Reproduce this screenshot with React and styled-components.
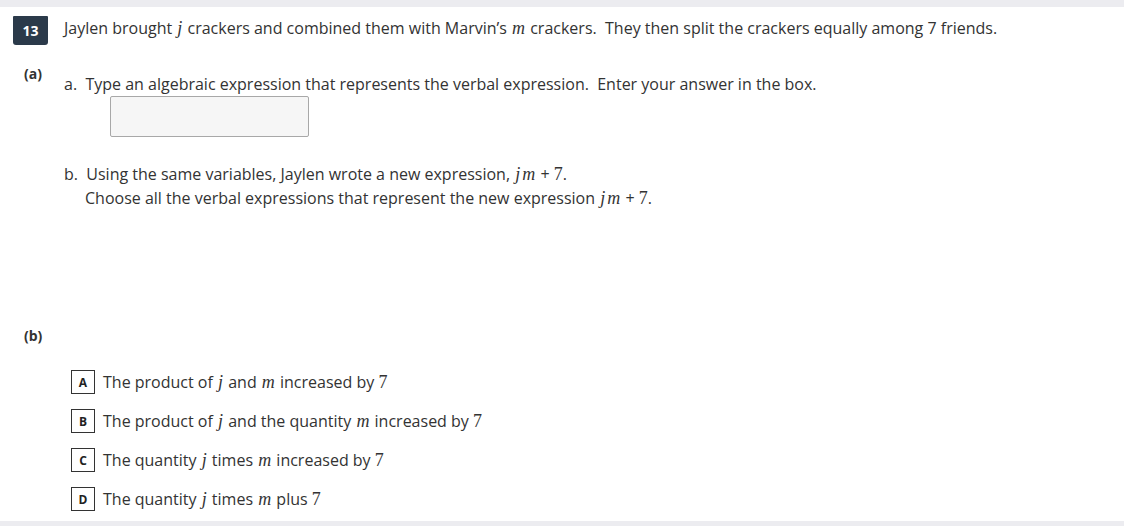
import React from 'react';
import styled, { createGlobalStyle } from 'styled-components';

const GlobalStyle = createGlobalStyle`
  html, body {
    margin: 0;
    padding: 0;
    background: #ffffff;
  }
  body {
    font-family: "Open Sans", "Liberation Sans", sans-serif;
    color: #333333;
  }
`;

const Page = styled.div`
  width: 1124px;
  height: 526px;
  display: flex;
  flex-direction: column;
  overflow: hidden;
  background: #ffffff;
`;

const Strip = styled.div`
  height: ${(p) => p.h}px;
  flex-shrink: 0;
  background: #ececf0;
`;

const Scroller = styled.div`
  height: 504px;
  overflow: hidden;
  flex-shrink: 0;
`;

const Spacer = styled.div`
  flex: 1;
`;

const QuestionHeader = styled.div`
  display: flex;
  align-items: flex-start;
  gap: 16px;
  padding: 9px 0 0 13px;
`;

const Badge = styled.div`
  width: 35px;
  height: 29px;
  background: #2b3a4a;
  color: #ffffff;
  font-weight: 700;
  font-size: 14px;
  display: flex;
  align-items: center;
  justify-content: center;
  border-radius: 1px 1px 3px 3px;
`;

const Stem = styled.p`
  margin: 0;
  font-size: 16px;
  line-height: 24px;
`;

const Part = styled.div`
  display: grid;
  grid-template-columns: 64px 1fr;
  margin-top: ${(p) => p.top}px;
`;

const PartLabel = styled.div`
  font-size: 14px;
  font-weight: 700;
  padding-left: 24px;
  line-height: 20px;
`;

const Content = styled.div`
  display: flex;
  flex-direction: column;
`;

const Line = styled.div`
  font-size: 16px;
  line-height: 24px;
  padding-left: ${(p) => (p.indent ? 21 : 0)}px;
  margin-top: ${(p) => p.top || 0}px;
`;

const AnswerBox = styled.div`
  width: 197px;
  height: 39px;
  margin: 0 0 0 46px;
  border: 1px solid #a8a8a8;
  border-radius: 2px;
  background: #f6f6f6;
`;

const Var = styled.span`
  font-family: "Liberation Serif", "DejaVu Serif", serif;
  font-style: italic;
  font-size: 18px;
  padding: 0 1px;
`;

const Num = styled.span`
  font-family: "Liberation Serif", "DejaVu Serif", serif;
  font-size: 18px;
`;

const Options = styled.div`
  display: flex;
  flex-direction: column;
  gap: 15px;
  padding-left: 7px;
  margin-top: 44px;
`;

const Option = styled.div`
  display: flex;
  align-items: center;
  gap: 8px;
  height: 24px;
`;

const Letter = styled.div`
  width: 22px;
  height: 22px;
  border: 1px solid #333333;
  font-size: 12px;
  font-weight: 700;
  display: flex;
  align-items: center;
  justify-content: center;
  color: #222222;
`;

const OptText = styled.div`
  font-size: 16px;
  line-height: 24px;
`;

const j = <Var>j</Var>;
const m = <Var>m</Var>;
const seven = <Num>7</Num>;

const options = [
  ['A', <>The product of {j} and {m} increased by {seven}</>],
  ['B', <>The product of {j} and the quantity {m} increased by {seven}</>],
  ['C', <>The quantity {j} times {m} increased by {seven}</>],
  ['D', <>The quantity {j} times {m} plus {seven}</>],
];

export default function App() {
  return (
    <Page>
      <GlobalStyle />
      <Strip h={7} />
      <Scroller>
        <QuestionHeader>
          <Badge>13</Badge>
          <Stem>
            Jaylen brought {j} crackers and combined them with Marvin’s {m} crackers.&nbsp; They then split
            the crackers equally among 7 friends.
          </Stem>
        </QuestionHeader>
        <Part top={19}>
          <PartLabel>(a)</PartLabel>
          <Content>
            <Line top={8}>a.&nbsp; Type an algebraic expression that represents the verbal expression.&nbsp; Enter your answer in the box.</Line>
            <AnswerBox />
            <Line top={25}>
              b.&nbsp; Using the same variables, Jaylen wrote a new expression, {j}{m} + {seven}.
            </Line>
            <Line indent>
              Choose all the verbal expressions that represent the new expression {j}{m} + {seven}.
            </Line>
          </Content>
        </Part>
        <Part top={116}>
          <PartLabel>(b)</PartLabel>
          <Content>
            <Options>
              {options.map(([k, t]) => (
                <Option key={k}>
                  <Letter>{k}</Letter>
                  <OptText>{t}</OptText>
                </Option>
              ))}
            </Options>
          </Content>
        </Part>
      </Scroller>
      <Spacer />
      <Strip h={5} />
    </Page>
  );
}
